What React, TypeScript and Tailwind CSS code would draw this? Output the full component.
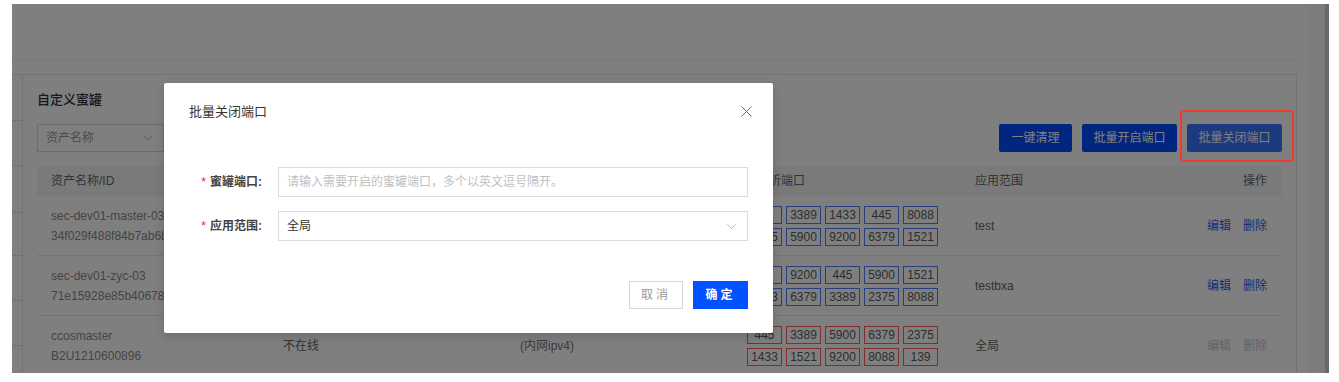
import { X, ChevronDown } from 'lucide-react';

const font = "font-['Liberation_Sans','Noto_Sans_CJK_SC',sans-serif]";

type Row = {
  name: string;
  id: string;
  status: string;
  ip: string;
  ports: string[][];
  tone: 'blue' | 'red';
  scope: string;
  disabled: boolean;
};

// first two rows sit under the dialog, only the port tags and scope show
const rows: Row[] = [
  {
    name: 'sec-dev01-master-03',
    id: '34f029f488f84b7ab6bd93c1',
    status: '',
    ip: '',
    ports: [
      ['22', '3389', '1433', '445', '8088'],
      ['2375', '5900', '9200', '6379', '1521'],
    ],
    tone: 'blue',
    scope: 'test',
    disabled: false,
  },
  {
    name: 'sec-dev01-zyc-03',
    id: '71e15928e85b40678552a7d0',
    status: '',
    ip: '',
    ports: [
      ['22', '9200', '445', '5900', '1521'],
      ['1433', '6379', '3389', '2375', '8088'],
    ],
    tone: 'blue',
    scope: 'testbxa',
    disabled: false,
  },
  {
    name: 'ccosmaster',
    id: 'B2U1210600896',
    status: '不在线',
    ip: '(内网ipv4)',
    ports: [
      ['445', '3389', '5900', '6379', '2375'],
      ['1433', '1521', '9200', '8088', '139'],
    ],
    tone: 'red',
    scope: '全局',
    disabled: true,
  },
];

const leftStrip = [46, 45, 47, 43, 45, 45];

function PortTag({ port, tone }: { port: string; tone: 'blue' | 'red' }) {
  return (
    <span
      className={`flex h-[18px] w-[35px] items-center justify-center border text-[12px] leading-none text-[#5a5a5a] ${
        tone === 'blue' ? 'border-[#4f7cff]' : 'border-[#ff5a5a]'
      }`}
    >
      {port}
    </span>
  );
}

export default function App() {
  return (
    <div className={`h-[382px] w-[1339px] overflow-hidden bg-white pl-[12px] pt-[4px] ${font}`}>
      <div className="relative flex h-[369px] w-[1317px] overflow-hidden bg-white">
        {/* page under the mask */}
        <div className="w-[1295px]">
          <div className="h-[56px] w-[1284px] border-b border-[#efefef]" />
          <div className="h-[14px]" />
          <div className="flex">
            <div className="w-[11px] border-t border-r border-[#e5e5e5]">
              {leftStrip.map((h, i) => (
                <div key={i} className="border-b border-[#e5e5e5]" style={{ height: h }} />
              ))}
            </div>
            <div className="h-[320px] w-[1274px] border-t border-r border-[#e5e5e5] px-[14px] pt-[16px]">
              <div className="text-[13px] font-medium leading-[18px] text-[#333]">自定义蜜罐</div>
              <div className="mt-[15px] flex h-[28px] items-center justify-between">
                <div className="flex h-[28px] w-[127px] items-center justify-between border border-[#d9d9d9] pl-[8px] pr-[8px] text-[12px] text-[#999]">
                  <span>资产名称</span>
                  <ChevronDown size={14} strokeWidth={1.5} className="text-[#aaa]" />
                </div>
                <div className="flex gap-[10px] text-[12px] text-white">
                  <button className="h-[28px] w-[73px] rounded-[2px] bg-[#004cff]">一键清理</button>
                  <button className="h-[28px] w-[95px] rounded-[2px] bg-[#004cff]">批量开启端口</button>
                  <button className="h-[28px] w-[95px] rounded-[2px] bg-[#3a74ff]">批量关闭端口</button>
                </div>
              </div>

              <div className="mt-[14px] text-[12px]">
                <div className="flex h-[30px] items-center bg-[#f5f5f5] text-[#666]">
                  <div className="w-[210px] pl-[14px]">资产名称/ID</div>
                  <div className="w-[259px]" />
                  <div className="w-[227px]" />
                  <div className="w-[228px] pl-[24px]">监听端口</div>
                  <div className="w-[188px] pl-[14px]">应用范围</div>
                  <div className="w-[132px] pr-[14px] text-right">操作</div>
                </div>
                {rows.map((r) => (
                  <div key={r.name} className="flex h-[60px] items-center border-b border-[#e8e8e8]">
                    <div className="w-[210px] overflow-hidden whitespace-nowrap pl-[14px] leading-[20px] text-[#888]">
                      <div>{r.name}</div>
                      <div>{r.id}</div>
                    </div>
                    <div className="w-[259px] pl-[36px] text-[#666]">{r.status}</div>
                    <div className="w-[227px] pl-[14px] text-[#777]">{r.ip}</div>
                    <div className="flex w-[228px] flex-col gap-[4px] pl-[14px]">
                      {r.ports.map((line, i) => (
                        <div key={i} className="flex gap-[4px]">
                          {line.map((p) => (
                            <PortTag key={p} port={p} tone={r.tone} />
                          ))}
                        </div>
                      ))}
                    </div>
                    <div className="w-[188px] pl-[14px] text-[#666]">{r.scope}</div>
                    <div
                      className={`flex w-[132px] justify-end gap-[12px] pr-[14px] ${
                        r.disabled ? 'text-[#c8c8c8]' : 'text-[#2f5af0]'
                      }`}
                    >
                      <span>编辑</span>
                      <span>删除</span>
                    </div>
                  </div>
                ))}
              </div>
            </div>
          </div>
        </div>
        <div className="w-[18px] bg-[#f8f8f8]" />
        <div className="w-[4px] bg-[#d2d2d2]" />

        {/* mask */}
        <div className="absolute inset-0 bg-black/50" />

        {/* annotation box */}
        <div className="absolute left-[1168px] top-[106px] h-[52px] w-[114px] rounded-[4px] border-2 border-[#f03a2e]" />

        {/* modal */}
        <div className="absolute left-[152px] top-[79px] h-[250px] w-[609px] rounded-[2px] bg-white shadow-[0_4px_12px_rgba(0,0,0,0.15)]">
          <div className="flex items-center justify-between pl-[25px] pr-[17px] pt-[19px]">
            <span className="text-[13px] leading-[18px] text-[#333]">批量关闭端口</span>
            <X size={19} strokeWidth={1.2} className="text-[#666]" />
          </div>

          <div className="mt-[46px] flex items-center text-[12px]">
            <div className="w-[98px] text-right font-semibold text-[#444]">
              <span className="mr-[4px] font-normal text-[#f5222d]">*</span>蜜罐端口:
            </div>
            <div className="ml-[16px] flex h-[30px] w-[470px] items-center border border-[#dcdcdc] pl-[8px] text-[#bfbfbf]">
              请输入需要开启的蜜罐端口，多个以英文逗号隔开。
            </div>
          </div>

          <div className="mt-[14px] flex items-center text-[12px]">
            <div className="w-[98px] text-right font-semibold text-[#444]">
              <span className="mr-[4px] font-normal text-[#f5222d]">*</span>应用范围:
            </div>
            <div className="ml-[16px] flex h-[30px] w-[470px] items-center justify-between border border-[#dcdcdc] pl-[8px] pr-[8px] text-[#333]">
              <span>全局</span>
              <ChevronDown size={15} strokeWidth={1.2} className="text-[#999]" />
            </div>
          </div>

          <div className="mt-[40px] flex justify-end gap-[10px] pr-[25px] text-[12px]">
            <button className="h-[28px] w-[54px] border border-[#d6d6d6] bg-white tracking-[3px] text-[#999]">
              取消
            </button>
            <button className="h-[28px] w-[55px] bg-[#0052ff] font-bold tracking-[3px] text-white">
              确定
            </button>
          </div>
        </div>
      </div>
    </div>
  );
}
